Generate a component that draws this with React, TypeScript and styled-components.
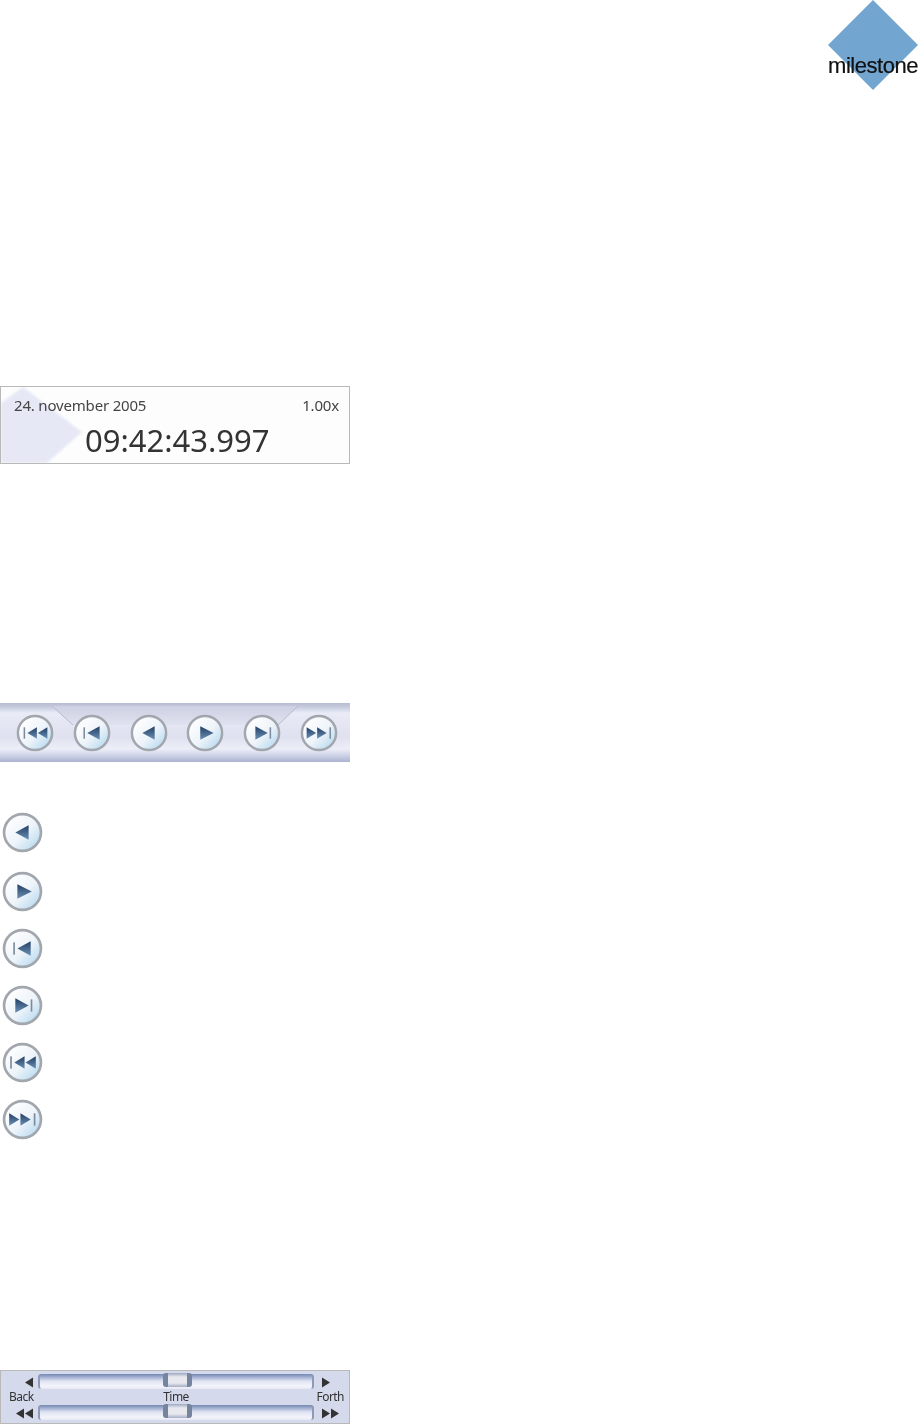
import { createGlobalStyle, styled } from 'styled-components'

const GlobalStyle = createGlobalStyle`
  html, body {
    margin: 0;
    padding: 0;
    background: #fff;
  }
`

const Page = styled.div`
  width: 918px;
  height: 1424px;
  overflow: hidden;
  display: flex;
  flex-direction: column;
  font-family: 'Noto Sans', 'Open Sans', sans-serif;
`

const LogoRow = styled.header`
  display: flex;
  justify-content: flex-end;
  height: 386px;
`

const Logo = styled.div`
  position: relative;
  width: 90px;
  height: 90px;
`

const LogoMark = styled.svg`
  display: block;
  width: 90px;
  height: 90px;
  filter: blur(0.3px);
`

const LogoText = styled.span`
  position: absolute;
  left: 0;
  top: 52px;
  font-family: 'Liberation Sans', Arial, sans-serif;
  font-size: 22px;
  line-height: 28px;
  letter-spacing: -0.45px;
  color: #111;
  filter: blur(0.4px);
  -webkit-text-stroke: 0.2px #111;
`

const TimePanel = styled.section`
  position: relative;
  box-sizing: border-box;
  width: 350px;
  height: 78px;
  border: 1px solid #b9b9b9;
  background: #fdfdfd;
  overflow: hidden;
  margin-bottom: 239px;
`

const PanelDiamond = styled.svg`
  position: absolute;
  left: 0;
  top: 0;
  width: 90px;
  height: 76px;
  filter: blur(0.8px);
`

const TimeHead = styled.div`
  position: relative;
  display: flex;
  justify-content: space-between;
  padding: 8px 10px 0 13px;
  font-size: 15px;
  line-height: 20px;
  letter-spacing: -0.18px;
  color: #444;
  filter: blur(0.45px);
`

const Clock = styled.div`
  position: relative;
  padding-left: 84px;
  margin-top: 5px;
  font-size: 31px;
  line-height: 40px;
  color: #333;
  filter: blur(0.4px);
`

const Toolbar = styled.section`
  position: relative;
  box-sizing: border-box;
  width: 350px;
  height: 59px;
  display: flex;
  align-items: center;
  justify-content: space-between;
  padding: 0 12px 0 16px;
  background: linear-gradient(#b7bcd0 0, #c6cadd 4px, #e9ebf6 10px, #dfe1f0 34px, #eceef8 46px, #c6cbe2 54px, #aab2cf 59px);
  margin-bottom: 50px;
`

const ToolbarNotch = styled.svg`
  position: absolute;
  left: 0;
  top: 0;
  width: 350px;
  height: 30px;
  filter: blur(0.6px);
`

const ButtonStack = styled.div`
  display: flex;
  flex-direction: column;
  gap: 17px;
  padding-left: 2px;
  height: 558px;
`

const StackItem = styled.div<{ $extra?: number }>`
  height: 40px;
  margin-top: ${(p) => p.$extra ?? 0}px;
`

const RoundIcon = styled.svg<{ $size: number }>`
  position: relative;
  display: block;
  width: ${(p) => p.$size}px;
  height: ${(p) => p.$size}px;
  filter: blur(0.45px);
`

const SliderPanel = styled.section`
  box-sizing: border-box;
  width: 350px;
  height: 54px;
  border: 1px solid #b9b9b9;
  background: #d5d9ec;
  display: grid;
  grid-template-columns: 37px 1fr 35px;
  grid-template-rows: 15px 15px 16px;
  padding: 3px 0;
`

const ArrowCell = styled.div<{ $side: 'left' | 'right' }>`
  display: flex;
  align-items: center;
  justify-content: ${(p) => (p.$side === 'left' ? 'flex-end' : 'flex-start')};
  padding: ${(p) => (p.$side === 'left' ? '2px 5px 0 0' : '2px 0 0 8px')};
`

const ArrowGlyph = styled.svg<{ $width: number }>`
  display: block;
  width: ${(p) => p.$width}px;
  height: 13px;
  filter: blur(0.4px);
`

const Track = styled.div`
  position: relative;
  align-self: end;
  height: 15px;
  border-radius: 3px;
  border-left: 2px solid #8f9ab8;
  border-right: 2px solid #8f9ab8;
  background: linear-gradient(#7488b2 0, #a0aed0 3px, #dfe3f2 7px, #f4f5fb 12px, #e6e8f4 15px);
  filter: blur(0.5px);
`

const Thumb = styled.div`
  position: absolute;
  left: 123px;
  top: -1px;
  box-sizing: border-box;
  width: 29px;
  height: 14px;
  border-radius: 3px;
  border-left: 5px solid #76849f;
  border-right: 5px solid #76849f;
  background: linear-gradient(#9da8c2 0, #e8e9ef 4px, #e8e9ef 10px, #a5aec6 14px);
`

const SliderLabel = styled.div<{ $align: 'left' | 'center' | 'right' }>`
  font-size: 12px;
  line-height: 15px;
  letter-spacing: -0.55px;
  color: #333;
  text-align: ${(p) => p.$align};
  padding: ${(p) => (p.$align === 'left' ? '0 0 0 8px' : p.$align === 'right' ? '0 5px 0 0' : '0')};
  white-space: nowrap;
  filter: blur(0.4px);
`

type ButtonKind = 'first' | 'prev' | 'back' | 'play' | 'next' | 'last'

// glyphs are drawn on a 40x40 box, the ring is shared
const marks: Record<ButtonKind, string[]> = {
  back: ['M26 13 L13 20 L26 27 Z'],
  play: ['M15 13 L29 20 L15 27 Z'],
  prev: ['M28 13 L15 20 L28 27 Z'],
  next: ['M13 13 L26 20 L13 27 Z'],
  first: ['M22 14 L12 20 L22 26 Z', 'M33 14 L23 20 L33 26 Z'],
  last: ['M7 14 L17 20 L7 26 Z', 'M18 14 L28 20 L18 26 Z'],
}

const bars: Partial<Record<ButtonKind, number>> = { first: 8, prev: 11, next: 28, last: 31 }

function RoundButton({ kind, size, id }: { kind: ButtonKind; size: number; id: string }) {
  const bar = bars[kind]
  return (
    <RoundIcon $size={size} viewBox="0 0 40 40">
      <defs>
        <linearGradient id={`face-${id}`} x1="0.1" y1="0.1" x2="0.9" y2="0.9">
          <stop offset="0" stopColor="#ffffff" />
          <stop offset="0.55" stopColor="#eef4fa" />
          <stop offset="1" stopColor="#b8daf0" />
        </linearGradient>
        <linearGradient id={`mark-${id}`} x1="0" y1="0" x2="0" y2="1">
          <stop offset="0" stopColor="#243f66" />
          <stop offset="1" stopColor="#6a90b4" />
        </linearGradient>
      </defs>
      <circle cx="20" cy="20" r="18" fill={`url(#face-${id})`} stroke="#a2a6ad" strokeWidth="2.6" />
      {bar !== undefined && <rect x={bar} y="14" width="1.6" height="12" fill="#7b8b9c" />}
      {marks[kind].map((d) => (
        <path key={d} d={d} fill={`url(#mark-${id})`} />
      ))}
    </RoundIcon>
  )
}

function LeftArrows({ double }: { double?: boolean }) {
  return double ? (
    <ArrowGlyph $width={17} viewBox="0 0 17 12">
      <path d="M8 1 L0 6 L8 11 Z M17 1 L9 6 L17 11 Z" fill="#333" />
    </ArrowGlyph>
  ) : (
    <ArrowGlyph $width={8} viewBox="0 0 8 12">
      <path d="M8 1 L0 6 L8 11 Z" fill="#333" />
    </ArrowGlyph>
  )
}

function RightArrows({ double }: { double?: boolean }) {
  return double ? (
    <ArrowGlyph $width={17} viewBox="0 0 17 12">
      <path d="M0 1 L8 6 L0 11 Z M9 1 L17 6 L9 11 Z" fill="#333" />
    </ArrowGlyph>
  ) : (
    <ArrowGlyph $width={8} viewBox="0 0 8 12">
      <path d="M0 1 L8 6 L0 11 Z" fill="#333" />
    </ArrowGlyph>
  )
}

const toolbarKinds: ButtonKind[] = ['first', 'prev', 'back', 'play', 'next', 'last']
const stackKinds: ButtonKind[] = ['back', 'play', 'prev', 'next', 'first', 'last']

export default function App() {
  return (
    <Page>
      <GlobalStyle />
      <LogoRow>
        <Logo>
          <LogoMark viewBox="0 0 90 90">
            <polygon points="45,0 90,45 45,90 0,45" fill="#72a5cf" />
          </LogoMark>
          <LogoText>milestone</LogoText>
        </Logo>
      </LogoRow>

      <TimePanel>
        <PanelDiamond viewBox="0 0 90 76">
          <polygon points="22,0 81,45 46,76 0,76 0,16" fill="#e6e9f5" />
        </PanelDiamond>
        <TimeHead>
          <span>24. november 2005</span>
          <span>1.00x</span>
        </TimeHead>
        <Clock>09:42:43.997</Clock>
      </TimePanel>

      <Toolbar>
        <ToolbarNotch viewBox="0 0 350 30">
          <defs>
            <linearGradient id="notch-fill" x1="0" y1="0" x2="0" y2="1">
              <stop offset="0" stopColor="#cdd0e2" />
              <stop offset="1" stopColor="#e0e2f0" />
            </linearGradient>
          </defs>
          <path d="M52 3 L73 22 H278 L298 3 Z" fill="url(#notch-fill)" />
          <path d="M52 3 L73 22 M298 3 L278 22" stroke="#b5bace" strokeWidth="1" fill="none" />
        </ToolbarNotch>
        {toolbarKinds.map((kind) => (
          <RoundButton key={kind} kind={kind} size={38} id={`bar-${kind}`} />
        ))}
      </Toolbar>

      <ButtonStack>
        {stackKinds.map((kind, i) => (
          <StackItem key={kind} $extra={i === 1 ? 2 : 0}>
            <RoundButton kind={kind} size={41} id={`stack-${kind}`} />
          </StackItem>
        ))}
      </ButtonStack>

      <SliderPanel>
        <ArrowCell $side="left">
          <LeftArrows />
        </ArrowCell>
        <Track>
          <Thumb />
        </Track>
        <ArrowCell $side="right">
          <RightArrows />
        </ArrowCell>
        <SliderLabel $align="left">Back</SliderLabel>
        <SliderLabel $align="center">Time</SliderLabel>
        <SliderLabel $align="right">Forth</SliderLabel>
        <ArrowCell $side="left">
          <LeftArrows double />
        </ArrowCell>
        <Track>
          <Thumb />
        </Track>
        <ArrowCell $side="right">
          <RightArrows double />
        </ArrowCell>
      </SliderPanel>
    </Page>
  )
}
